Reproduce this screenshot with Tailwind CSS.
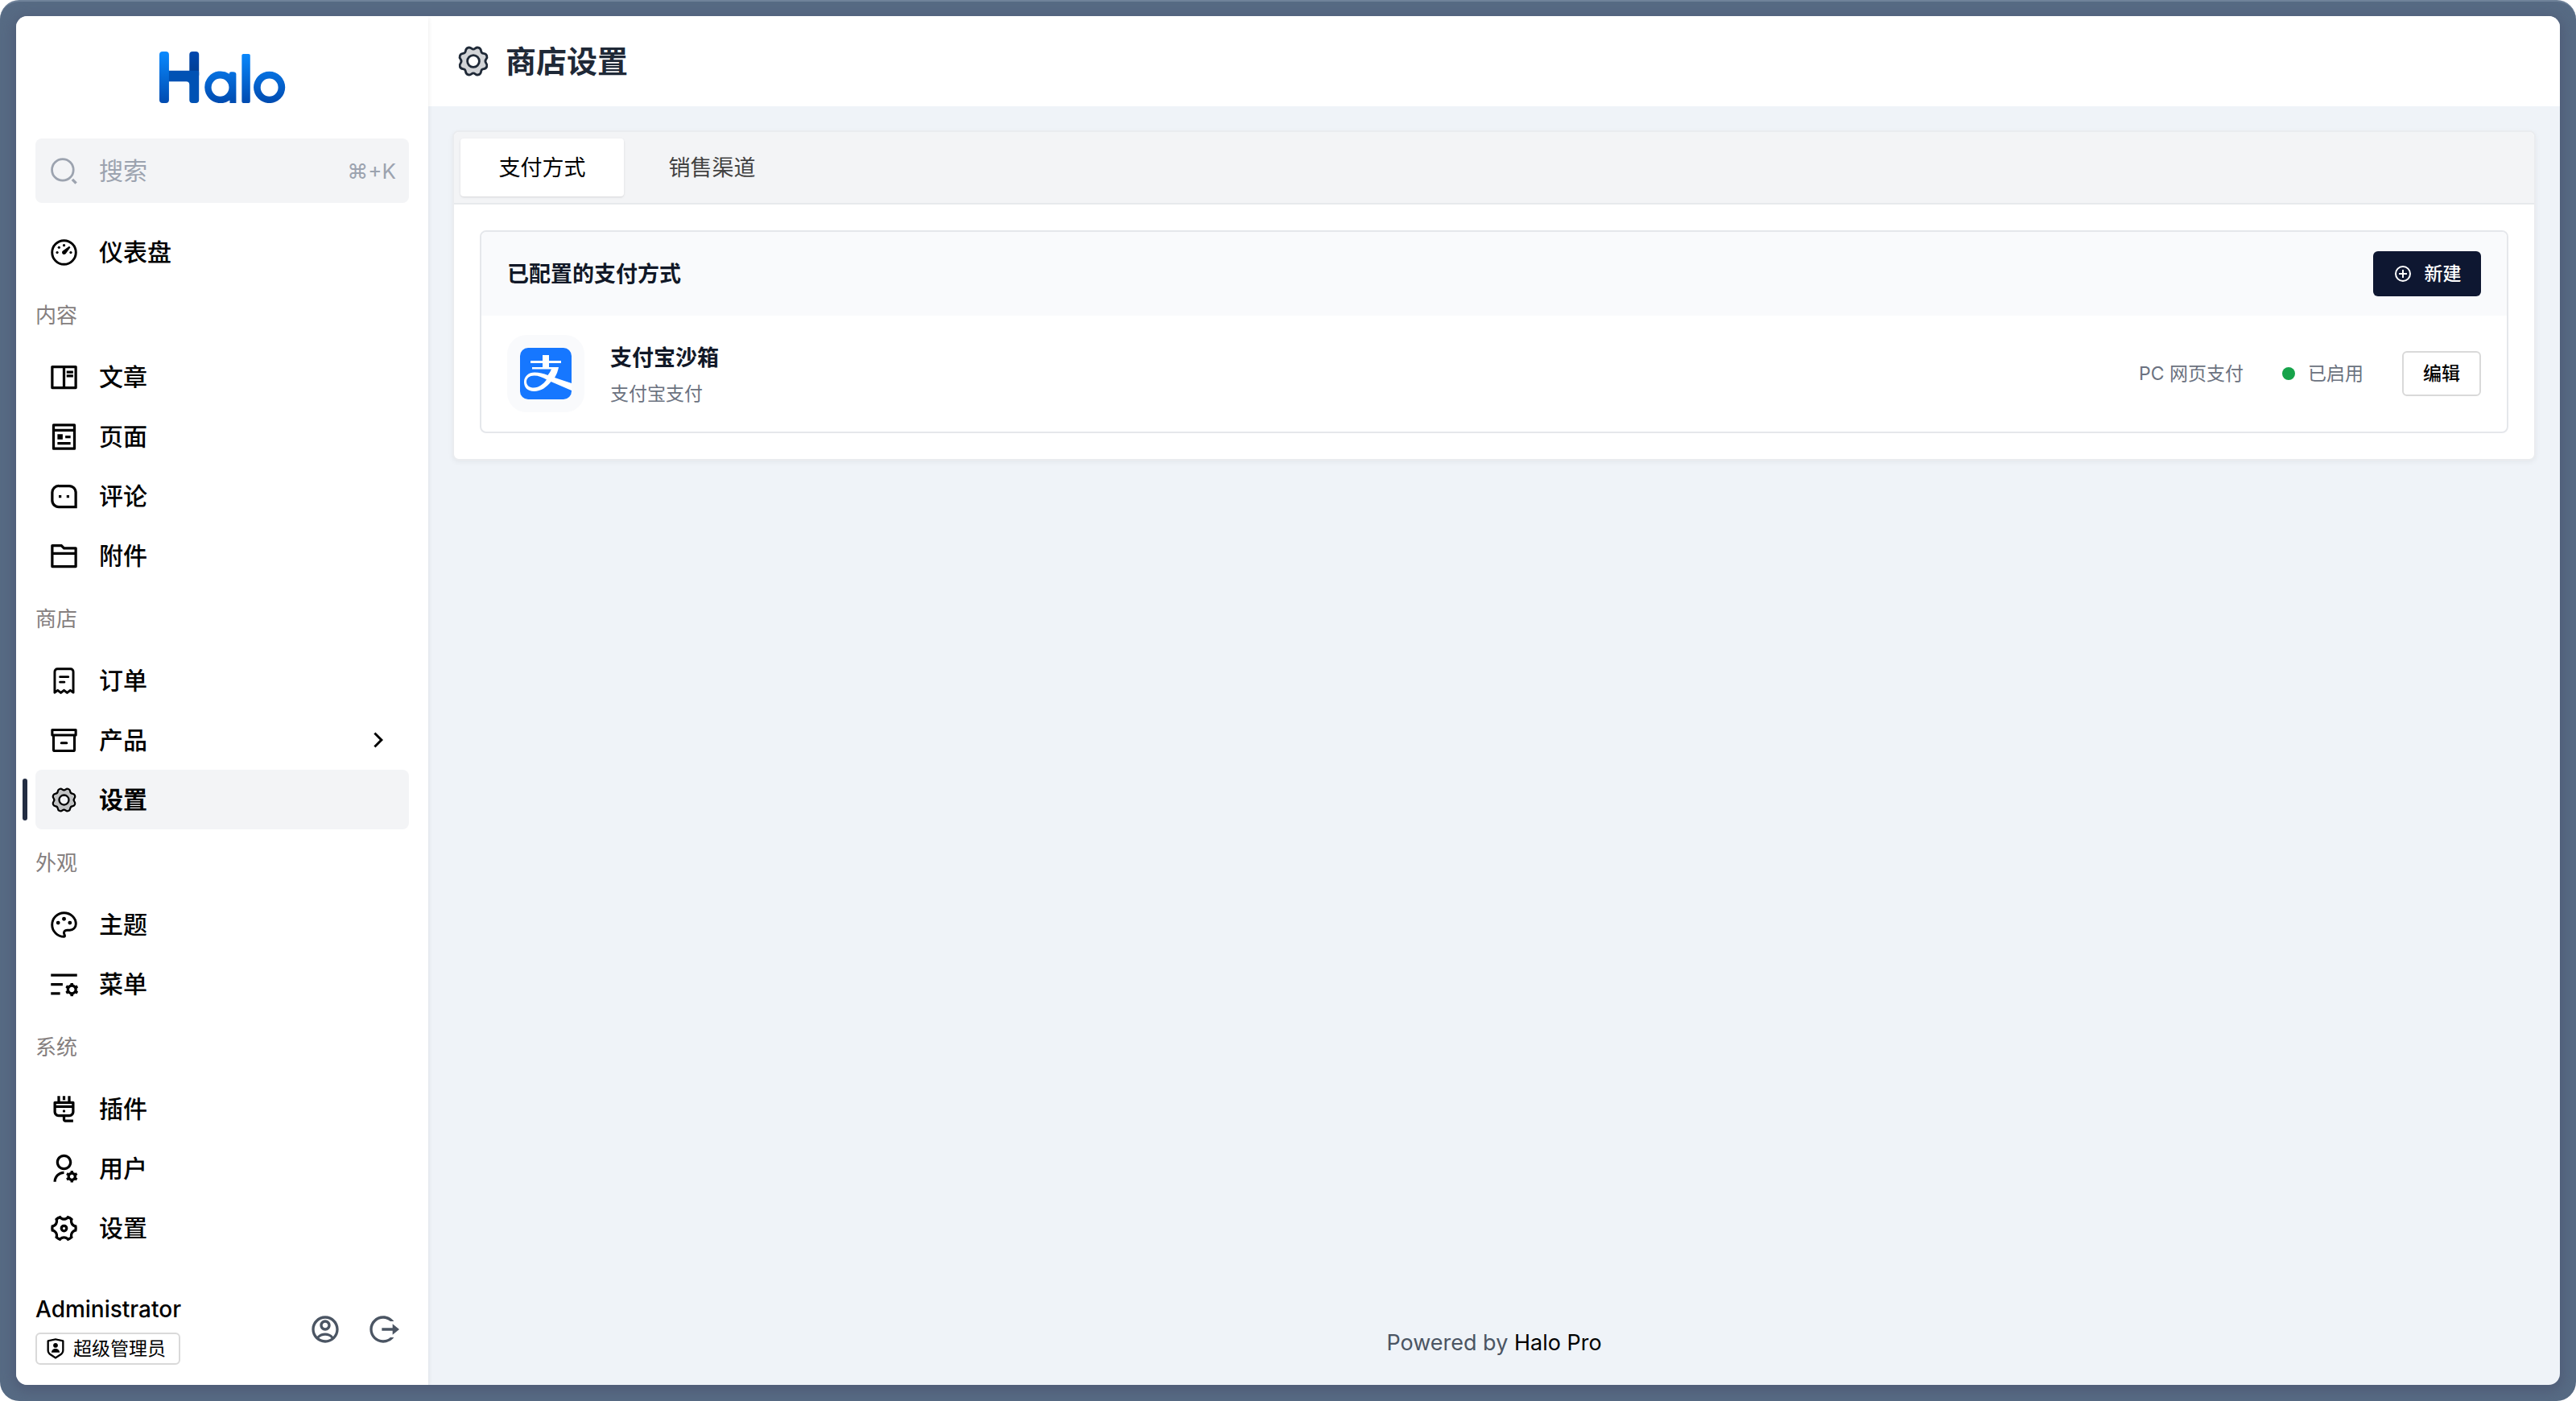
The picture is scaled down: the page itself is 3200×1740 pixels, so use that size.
<!DOCTYPE html>
<html lang="zh-CN">
<head>
<meta charset="utf-8">
<title>商店设置 - Halo</title>
<script src="https://cdn.jsdelivr.net/npm/@tailwindcss/browser@4"></script>
</head>
<body class="bg-white font-['Inter','Noto_Sans_CJK_SC',sans-serif] text-black">
<svg class="hidden" aria-hidden="true">
  <symbol id="gear" viewBox="0 0 24 24">
    <g stroke="currentColor" stroke-width="1.400" stroke-linejoin="round">
    <path d="M10.860 4.100Q12 5 13.140 4.100Q14.280 3.190 15.450 3.680Q16.620 4.160 16.790 5.610Q16.950 7.050 18.390 7.210Q19.840 7.380 20.320 8.550Q20.810 9.720 19.900 10.860Q19 12 19.900 13.140Q20.810 14.280 20.320 15.450Q19.840 16.620 18.390 16.790Q16.950 16.950 16.790 18.390Q16.620 19.840 15.450 20.320Q14.280 20.810 13.140 19.900Q12 19 10.860 19.900Q9.720 20.810 8.550 20.320Q7.380 19.840 7.210 18.390Q7.050 16.950 5.610 16.790Q4.160 16.620 3.680 15.450Q3.190 14.280 4.100 13.140Q5 12 4.100 10.860Q3.190 9.720 3.680 8.550Q4.160 7.380 5.610 7.210Q7.050 7.050 7.210 5.610Q7.380 4.160 8.550 3.680Q9.720 3.190 10.860 4.100ZM12 8.300a3.700 3.700 0 1 0 0 7.400a3.700 3.700 0 1 0 0-7.400Z" fill="currentColor" fill-opacity=".2" fill-rule="evenodd"/>
    </g>
  </symbol>
</svg>
<div class="min-h-screen p-5 rounded-[24px] bg-[#576b84] border-t-2 border-[#70839a] flex">
  <div class="flex-1 flex bg-[#eff3f8] rounded-[14px] overflow-hidden shadow-[0_4px_16px_4px_rgba(70,75,105,0.45)] -mt-[2px]">
    <aside class="w-[512px] shrink-0 bg-white flex flex-col shadow-[0_2px_6px_rgba(0,0,0,0.09)] relative">
      <div class="h-[152px] pt-[44px] flex justify-center">
        <svg class="w-[157px] h-[64px]" viewBox="0 0 158 66" preserveAspectRatio="none" role="img" aria-label="Halo">
          <defs>
            <linearGradient id="g" gradientUnits="userSpaceOnUse" x1="0" y1="0" x2="0" y2="66"><stop offset="0" stop-color="#0a8aff"/><stop offset="1" stop-color="#004bb0"/></linearGradient>
            <linearGradient id="d" x1="0" y1="0" x2="0" y2="1"><stop offset="0" stop-color="#0048b0"/><stop offset="1" stop-color="#003b8c"/></linearGradient>
          </defs>
          <rect x="37.500" y="0" width="12" height="34" rx="4" fill="url(#d)"/>
          <path d="M10 24.500H47.500Q49.500 24.500 49.500 26.500V62Q49.500 66 45.500 66H41.500Q37.500 66 37.500 62V42.500Q37.500 38.500 33.500 38.500H10Z" fill="#0052b4"/>
          <rect x="0" y="0" width="12" height="66" rx="4" fill="url(#g)"/>
          <rect x="103" y="3" width="10.500" height="63" rx="2" fill="url(#g)"/>
          <path d="M87.500 28.500V27.500Q88 26 90 26H92Q96 26 96 29V66H88V62.500A20 20.500 0 1 1 87.500 28.500ZM76 34.500a11 11.500 0 1 0 0 23a11 11.500 0 1 0 0-23Z" fill="url(#g)" fill-rule="evenodd"/>
          <path d="M137.500 25.500a19.700 20.300 0 1 1 0 40.600a19.700 20.300 0 1 1 0-40.600ZM137.500 34.500a11 11.500 0 1 0 0 23a11 11.500 0 1 0 0-23Z" fill="url(#g)" fill-rule="evenodd"/>
        </svg>
      </div>
      <button type="button" class="mx-6 h-20 shrink-0 px-4 flex items-center rounded-lg bg-[#f3f4f6] text-[#9ca3af] text-[30px] text-left">
        <svg class="w-[39px] h-[39px] mr-6" viewBox="0 0 24 24" fill="none" stroke="currentColor" stroke-width="1.700"><circle cx="11" cy="11" r="8.200"/><path d="M18.400 18.400L21.300 21.300" stroke-width="2.100"/></svg>
        <span class="flex-1">搜索</span>
        <kbd class="font-['Inter','DejaVu_Sans',sans-serif] text-[26px]">⌘+K</kbd>
      </button>
      <nav class="px-6 pt-6 text-[30px] leading-[42px] font-medium">
        <a href="#" class="h-[74px] px-4 flex items-center gap-6">
          <svg class="w-[39px] h-[39px]" viewBox="0 0 24 24" fill="currentColor"><circle cx="12" cy="12" r="9.100" fill="none" stroke="currentColor" stroke-width="1.800"/><circle cx="6.800" cy="12" r="1"/><circle cx="17.200" cy="12" r="1"/><circle cx="12" cy="6.600" r="1"/><circle cx="8.200" cy="8.200" r="1"/><path d="M16.900 8.100L13.400 12.900A1.600 1.600 0 1 1 11.300 10.600L16 7.300Z"/></svg>
          仪表盘</a>
        <h2 class="pt-[22px] pb-[19px] text-[26px] leading-10 font-normal text-[#857f7f]">内容</h2>
        <a href="#" class="h-[74px] px-4 flex items-center gap-6">
          <svg class="w-[39px] h-[39px]" viewBox="0 0 24 24" fill="currentColor"><path d="M2 3.990C2 3.440 2.450 3 2.990 3H21C21.560 3 22 3.440 22 3.990V20C22 20.560 21.540 21 21 21H2.990C2.440 21 2 20.560 2 20V3.990ZM11 5H4V19H11V5ZM13 5V19H20V5H13ZM14 7H19V9H14V7ZM14 10H19V12H14V10Z"/></svg>
          文章</a>
        <a href="#" class="h-[74px] px-4 flex items-center gap-6">
          <svg class="w-[39px] h-[39px]" viewBox="0 0 24 24" fill="currentColor"><path fill-rule="evenodd" d="M4 2H20Q21 2 21 3V21Q21 22 20 22H4Q3 22 3 21V3Q3 2 4 2ZM5 4V6H19V4ZM5 8V20H19V8ZM7 10H11V14H7ZM13 11H17V13H13ZM7 16H17V18H7Z"/></svg>
          页面</a>
        <a href="#" class="h-[74px] px-4 flex items-center gap-6">
          <svg class="w-[39px] h-[39px]" viewBox="0 0 24 24" fill="currentColor"><path d="M2 8.994A5.990 5.990 0 0 1 8 3h8c3.313 0 6 2.695 6 5.994V21H8c-3.313 0-6-2.695-6-5.994V8.994zM20 19V8.994A4.004 4.004 0 0 0 16 5H8a3.990 3.990 0 0 0-4 3.994v6.012A4.004 4.004 0 0 0 8 19h12zm-6-8h2v2h-2v-2zm-6 0h2v2H8v-2z"/></svg>
          评论</a>
        <a href="#" class="h-[74px] px-4 flex items-center gap-6">
          <svg class="w-[39px] h-[39px]" viewBox="0 0 24 24" fill="currentColor"><path d="M3 21C2.448 21 2 20.552 2 20V4C2 3.448 2.448 3 3 3H10.414L12.414 5H21C21.552 5 22 5.448 22 6V20C22 20.552 21.552 21 21 21H3ZM20 11H4V19H20V11ZM20 9V7H11.586L9.586 5H4V9H20Z"/></svg>
          附件</a>
        <h2 class="pt-[22px] pb-[19px] text-[26px] leading-10 font-normal text-[#857f7f]">商店</h2>
        <a href="#" class="h-[74px] px-4 flex items-center gap-6">
          <svg class="w-[39px] h-[39px]" viewBox="0 0 24 24" fill="none" stroke="currentColor" stroke-width="1.800" stroke-linecap="round" stroke-linejoin="round"><path d="M4.900 21V5A2.100 2.100 0 0 1 7 2.900H17A2.100 2.100 0 0 1 19.100 5V21L16.800 19.300L14.400 21.200L12 19.300L9.600 21.200L7.200 19.300Z"/><path d="M9 9H15.200M9 13H12.200"/></svg>
          订单</a>
        <a href="#" class="h-[74px] px-4 flex items-center gap-6">
          <svg class="w-[39px] h-[39px]" viewBox="0 0 24 24" fill="none" stroke="currentColor" stroke-width="1.900" stroke-linecap="round" stroke-linejoin="round"><path d="M3 4H21V8H3ZM4 8V19A1 1 0 0 0 5 20H19A1 1 0 0 0 20 19V8M10 14H14"/></svg>
          <span class="flex-1">产品</span>
          <svg class="w-[36px] h-[36px] mr-1" viewBox="0 0 24 24" fill="currentColor"><path d="M13.172 12L8.222 7.050L9.636 5.636L16 12L9.636 18.364L8.222 16.950Z"/></svg></a>
        <a href="#" aria-current="page" class="relative h-[74px] px-4 flex items-center gap-6 rounded-lg bg-[#f3f4f6] font-bold">
          <span class="absolute -left-4 top-[11px] bottom-[11px] w-[6px] rounded-full bg-[#232d42]"></span>
          <svg class="w-[39px] h-[39px]"><use href="#gear"/></svg>
          设置</a>
        <h2 class="pt-[22px] pb-[19px] text-[26px] leading-10 font-normal text-[#857f7f]">外观</h2>
        <a href="#" class="h-[74px] px-4 flex items-center gap-6">
          <svg class="w-[39px] h-[39px]" viewBox="0 0 24 24" fill="currentColor"><path d="M12 2.900C17 2.900 21.100 6.700 21.100 11.400C21.100 14 19 16.100 16.400 16.100H14.300C12.700 16.100 11.700 17.400 12 18.600C12.300 19.600 13.200 21.100 12 21.100C7 21.100 2.900 17 2.900 12C2.900 7 7 2.900 12 2.900Z" fill="none" stroke="currentColor" stroke-width="1.800"/><circle cx="12" cy="7.500" r="1.500"/><circle cx="7.500" cy="10.500" r="1.500"/><circle cx="16.500" cy="10.500" r="1.500"/></svg>
          主题</a>
        <a href="#" class="h-[74px] px-4 flex items-center gap-6">
          <svg class="w-[39px] h-[39px]" viewBox="0 0 24 24" fill="currentColor"><path d="M2 18H9V20H2V18ZM2 11H11V13H2V11ZM2 4H22V6H2V4ZM20.674 13.025L21.830 12.634 22.830 14.366 21.914 15.171C21.970 15.439 22 15.716 22 16C22 16.284 21.970 16.561 21.914 16.829L22.830 17.634 21.830 19.366 20.674 18.975C20.264 19.344 19.776 19.630 19.239 19.804L19 21H17L16.761 19.804C16.224 19.630 15.737 19.344 15.326 18.975L14.170 19.366 13.170 17.634 14.086 16.829C14.030 16.561 14 16.284 14 16 14 15.716 14.030 15.439 14.086 15.171L13.170 14.366 14.170 12.634 15.326 13.025C15.737 12.656 16.224 12.371 16.761 12.196L17 11H19L19.239 12.196C19.776 12.371 20.264 12.656 20.674 13.025ZM18 18C19.105 18 20 17.105 20 16 20 14.895 19.105 14 18 14 16.895 14 16 14.895 16 16 16 17.105 16.895 18 18 18Z"/></svg>
          菜单</a>
        <h2 class="pt-[22px] pb-[19px] text-[26px] leading-10 font-normal text-[#857f7f]">系统</h2>
        <a href="#" class="h-[74px] px-4 flex items-center gap-6">
          <svg class="w-[39px] h-[39px]" viewBox="0 0 24 24" fill="currentColor"><path d="M13 18V20H19V22H13C11.895 22 11 21.105 11 20V18H8C5.791 18 4 16.209 4 14V7C4 6.448 4.448 6 5 6H7V2H9V6H15V2H17V6H19C19.552 6 20 6.448 20 7V14C20 16.209 18.209 18 16 18H13ZM8 16H16C17.105 16 18 15.105 18 14V11H6V14C6 15.105 6.895 16 8 16ZM18 8H6V9H18V8ZM12 14.500C11.448 14.500 11 14.052 11 13.500C11 12.948 11.448 12.500 12 12.500C12.552 12.500 13 12.948 13 13.500C13 14.052 12.552 14.500 12 14.500ZM11 2H13V5H11V2Z"/></svg>
          插件</a>
        <a href="#" class="h-[74px] px-4 flex items-center gap-6">
          <svg class="w-[39px] h-[39px]" viewBox="0 0 24 24" fill="currentColor"><path d="M12 14V16C8.686 16 6 18.686 6 22H4C4 17.582 7.582 14 12 14ZM12 13C8.685 13 6 10.315 6 7C6 3.685 8.685 1 12 1C15.315 1 18 3.685 18 7C18 10.315 15.315 13 12 13ZM12 11C14.210 11 16 9.210 16 7C16 4.790 14.210 3 12 3C9.790 3 8 4.790 8 7C8 9.210 9.790 11 12 11ZM14.595 18.811C14.533 18.551 14.500 18.279 14.500 18C14.500 17.721 14.533 17.449 14.594 17.189L13.603 16.616L14.603 14.884L15.595 15.457C15.988 15.085 16.468 14.803 17 14.645V13.500H19V14.645C19.532 14.803 20.012 15.085 20.405 15.457L21.397 14.884L22.397 16.616L21.405 17.188C21.467 17.449 21.500 17.721 21.500 18C21.500 18.279 21.467 18.551 21.405 18.811L22.397 19.384L21.397 21.116L20.405 20.543C20.012 20.915 19.532 21.197 19 21.355V22.500H17V21.355C16.468 21.197 15.988 20.915 15.595 20.543L14.603 21.116L13.603 19.384L14.595 18.811ZM18 19.500C18.828 19.500 19.500 18.828 19.500 18C19.500 17.172 18.828 16.500 18 16.500C17.172 16.500 16.500 17.172 16.500 18C16.500 18.828 17.172 19.500 18 19.500Z"/></svg>
          用户</a>
        <a href="#" class="h-[74px] px-4 flex items-center gap-6">
          <svg class="w-[39px] h-[39px]" viewBox="0 0 24 24" fill="currentColor"><path d="M2 12C2 11.135 2.110 10.296 2.316 9.496C3.406 9.553 4.488 9.010 5.072 8C5.655 6.990 5.584 5.783 4.991 4.867C6.184 3.695 7.668 2.820 9.326 2.361C9.822 3.334 10.833 4 12 4C13.167 4 14.178 3.334 14.674 2.361C16.332 2.820 17.817 3.695 19.009 4.867C18.416 5.783 18.345 6.990 18.928 8C19.512 9.010 20.594 9.553 21.684 9.496C21.890 10.296 22 11.135 22 12C22 12.864 21.890 13.703 21.684 14.503C20.594 14.447 19.512 14.990 18.928 16C18.345 17.009 18.416 18.217 19.009 19.133C17.817 20.304 16.332 21.179 14.674 21.638C14.178 20.666 13.167 20 12 20C10.833 20 9.822 20.666 9.326 21.638C7.668 21.179 6.184 20.304 4.991 19.133C5.584 18.217 5.655 17.009 5.072 16C4.488 14.990 3.406 14.447 2.316 14.503C2.110 13.703 2 12.864 2 12ZM6.804 15C7.434 16.091 7.615 17.346 7.368 18.524C7.776 18.814 8.210 19.065 8.665 19.274C9.562 18.471 10.739 18 12 18C13.261 18 14.438 18.471 15.335 19.274C15.790 19.065 16.224 18.814 16.632 18.524C16.385 17.346 16.566 16.091 17.196 15C17.826 13.909 18.823 13.125 19.965 12.749C19.988 12.502 20 12.252 20 12C20 11.748 19.988 11.498 19.965 11.250C18.823 10.875 17.826 10.091 17.196 9C16.566 7.908 16.385 6.654 16.632 5.476C16.224 5.186 15.790 4.934 15.335 4.726C14.438 5.528 13.261 6 12 6C10.739 6 9.562 5.528 8.665 4.726C8.210 4.934 7.776 5.186 7.368 5.476C7.615 6.654 7.434 7.908 6.804 9C6.174 10.091 5.177 10.875 4.035 11.250C4.012 11.498 4 11.748 4 12C4 12.252 4.012 12.502 4.035 12.749C5.177 13.125 6.174 13.909 6.804 15Z"/><circle cx="12" cy="12" r="2" fill="none" stroke="currentColor" stroke-width="2"/></svg>
          设置</a>
      </nav>
      <div class="mt-auto mx-6 mb-[25px] flex items-center justify-between">
        <div>
          <div class="text-[28px] leading-[38px] font-medium mb-[10px]">Administrator</div>
          <div class="inline-flex items-center h-[40px] w-[180px] pl-[9px] gap-2 border-2 border-[#d9d9d9] rounded-md text-[23px] leading-8">
            <svg class="w-[28px] h-[28px]" viewBox="0 0 24 24" fill="currentColor"><path d="M3.783 2.826L12 1L20.217 2.826C20.674 2.928 21 3.333 21 3.802V13.789C21 15.795 19.997 17.669 18.328 18.781L12 23L5.672 18.781C4.003 17.669 3 15.795 3 13.789V3.802C3 3.333 3.326 2.928 3.783 2.826ZM5 4.604V13.789C5 15.127 5.668 16.375 6.781 17.117L12 20.597L17.219 17.117C18.332 16.375 19 15.127 19 13.789V4.604L12 3.049L5 4.604ZM12 11C10.619 11 9.500 9.881 9.500 8.500C9.500 7.119 10.619 6 12 6C13.381 6 14.500 7.119 14.500 8.500C14.500 9.881 13.381 11 12 11ZM7.527 16C7.777 13.750 9.684 12 12 12C14.316 12 16.223 13.750 16.473 16H7.527Z"/></svg>
            <span>超级管理员</span>
          </div>
        </div>
        <div class="flex gap-8 pr-3 text-[#4b5563]">
          <button type="button" aria-label="个人中心"><svg class="w-10 h-10 block" viewBox="0 0 24 24" fill="currentColor"><path d="M12 22C6.477 22 2 17.523 2 12C2 6.477 6.477 2 12 2C17.523 2 22 6.477 22 12C22 17.523 17.523 22 12 22ZM7.361 18.505C8.639 19.442 10.215 20 12 20C13.685 20 15.241 19.479 16.518 18.591C15.475 17.355 13.873 16.700 12 16.700C10.100 16.700 8.430 17.300 7.361 18.505ZM6.023 17.260C7.491 15.600 9.600 14.700 12 14.700C14.350 14.700 16.460 15.620 17.893 17.400C19.202 15.991 20 14.089 20 12C20 7.582 16.418 4 12 4C7.582 4 4 7.582 4 12C4 14.022 4.752 15.845 6.023 17.260ZM12 13C9.791 13 8 11.209 8 9C8 6.791 9.791 5 12 5C14.209 5 16 6.791 16 9C16 11.209 14.209 13 12 13ZM12 11C13.105 11 14 10.105 14 9C14 7.895 13.105 7 12 7C10.895 7 10 7.895 10 9C10 10.105 10.895 11 12 11Z"/></svg></button>
          <button type="button" aria-label="退出登录"><svg class="w-10 h-10 block" viewBox="0 0 24 24" fill="currentColor"><path d="M12 22C6.477 22 2 17.523 2 12C2 6.477 6.477 2 12 2C15.271 2 18.175 3.571 20 6H17.290C15.879 4.756 14.028 4 12 4C7.582 4 4 7.582 4 12C4 16.418 7.582 20 12 20C14.029 20 15.881 19.243 17.292 18H20.001C18.176 20.429 15.272 22 12 22ZM19 16V13H11V11H19V8L24 12L19 16Z"/></svg></button>
        </div>
      </div>
    </aside>
    <main class="flex-1 flex flex-col">
      <header class="h-[112px] px-8 bg-white flex items-center gap-4 text-[#1f2937]">
        <svg class="w-12 h-12"><use href="#gear"/></svg>
        <h1 class="text-[38px] leading-[56px] font-bold">商店设置</h1>
      </header>
      <section class="mt-[30px] mx-[30px] bg-white border-2 border-[#eaecef] rounded-lg shadow-[0_2px_6px_rgba(0,0,0,0.05)] overflow-hidden">
        <div role="tablist" class="h-[90px] p-2 bg-[#f3f4f6] border-b-2 border-[#e7e9ec] flex text-[27px] leading-10">
          <button type="button" role="tab" aria-selected="true" class="h-[72px] w-[203px] pt-[2px] rounded-[4px] bg-white shadow-sm">支付方式</button>
          <button type="button" role="tab" aria-selected="false" class="h-[72px] w-[219px] pt-[2px] text-[#424242]">销售渠道</button>
        </div>
        <div class="p-8">
          <div class="border-2 border-[#e5e7eb] rounded-lg overflow-hidden">
            <div class="h-[104px] px-8 bg-[#f9fafc] flex items-center justify-between">
              <h2 class="pt-[2px] text-[27px] leading-10 font-bold text-[#111827]">已配置的支付方式</h2>
              <button type="button" class="h-14 w-[134px] flex items-center justify-center gap-[15px] rounded-md bg-[#0e1731] text-white text-[23px] font-medium"><svg class="w-6 h-6" viewBox="0 0 24 24" fill="none" stroke="currentColor" stroke-width="2"><circle cx="12" cy="12" r="9"/><path d="M12 7V17M7 12H17"/></svg>新建</button>
            </div>
            <div class="h-[144px] px-8 flex items-center">
              <div class="w-24 h-24 rounded-[24px] bg-[#f9fafc] p-4">
                <svg class="w-16 h-16" viewBox="0 0 64 64" role="img" aria-label="支付宝"><rect width="64" height="64" rx="10" fill="#1677ff"/><path d="M28 9H36V16H51V19H36V24H48C47 29 45.500 33 43 37L64 44V53L38.500 42C33 49 26 54 17.500 54C9 54 5 49 5 42.500C5 35 11 30.500 18 30.500C24 30.500 29 32 34.500 34C37 31 38 28.500 39 26.500H15V24H28V19H13V16H28ZM8 42C8 47 12 49.500 17 49.500C23.500 49.500 29 45 33 39.500C28 36.500 23 34.500 17.500 34.500C12 34.500 8 37.500 8 42Z" fill="#fff" fill-rule="evenodd"/></svg>
              </div>
              <div class="ml-8 pt-[2px] flex-1">
                <div class="text-[27px] leading-10 font-bold text-[#111827]">支付宝沙箱</div>
                <div class="mt-2 text-[23px] leading-8 text-[#6b7280]">支付宝支付</div>
              </div>
              <div class="flex items-center text-[23px] leading-8 text-[#6b7280]">
                <span>PC 网页支付</span>
                <span class="ml-12 mr-4 w-4 h-4 rounded-full bg-[#16a34a]"></span>
                <span>已启用</span>
                <button type="button" class="ml-12 h-14 w-[98px] border-2 border-[#d9d9d9] rounded-md bg-white text-black font-medium">编辑</button>
              </div>
            </div>
          </div>
        </div>
      </section>
      <footer class="mt-auto pb-[32px] text-center text-[27px] leading-10 text-[#4b5563]">Powered by <a href="#" class="text-black">Halo Pro</a></footer>
    </main>
  </div>
</div>
</body>
</html>
